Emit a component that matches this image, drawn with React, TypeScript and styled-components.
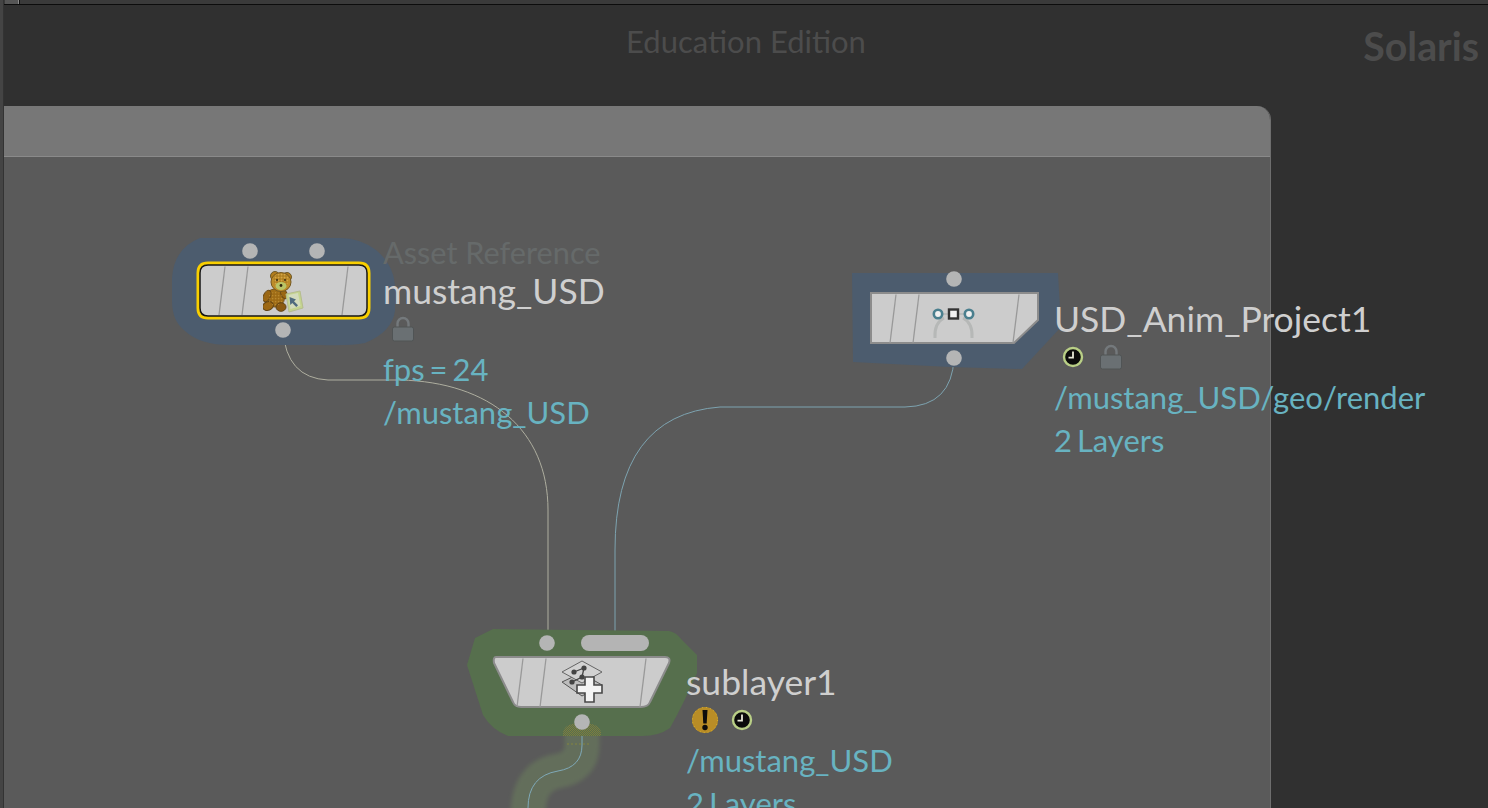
import styled, { createGlobalStyle } from "styled-components";

const GlobalStyle = createGlobalStyle`
    html, body {
        margin: 0;
        padding: 0;
        background: #303030;
    }
`

const FONT = `Lato, "Open Sans", sans-serif`;

type BadgeKind = "lock" | "clock" | "warn";

const Lock = () => (
    <svg width="26" height="26" viewBox="0 0 26 26">
        <path d="M7.5 12V7.500a5.500 5.500 0 0 1 11 0V12" fill="none" stroke="#74797c" strokeWidth="2.400" />
        <rect x="2.500" y="11" width="21" height="14" rx="2" fill="#6a7073" stroke="#505455" strokeWidth="1" />
    </svg>
)

const Clock = () => (
    <svg width="24" height="24" viewBox="0 0 24 24">
        <circle cx="12" cy="12" r="9" fill="#0b0b0b" stroke="#b9cf86" strokeWidth="2.400" />
        <path d="M12 6.500V12.600H7.500" fill="none" stroke="#e8e8d8" strokeWidth="1.800" />
    </svg>
)

const Warn = () => (
    <WarnIcon width="28" height="28" viewBox="0 0 28 28">
        <circle cx="14" cy="14" r="13" fill="#b98d26" />
        <circle cx="14" cy="14" r="12.600" fill="none" stroke="#e9c22e" strokeWidth="0.800" strokeDasharray="1 3" />
        <path d="M11.500 4h5l-.8 13.500h-3.400z" fill="#0c0c0c" />
        <circle cx="14" cy="21.500" r="2.700" fill="#0c0c0c" />
    </WarnIcon>
)

const badgeIcons = { lock: Lock, clock: Clock, warn: Warn };

const Teddy = () => (
    <svg x="63" y="6" width="42" height="44" viewBox="0 0 42 44">
        <defs>
            <pattern id="fur" width="3" height="3" patternUnits="userSpaceOnUse">
                <rect width="1.200" height="1.200" fill="#d9b058" />
                <rect x="1.500" y="1.500" width="1" height="1" fill="#70490e" />
            </pattern>
        </defs>
        <circle cx="12" cy="5" r="4.500" fill="#b27d1d" stroke="#6c5a2c" strokeWidth="1" />
        <circle cx="24" cy="6" r="4.500" fill="#b27d1d" stroke="#6c5a2c" strokeWidth="1" />
        <ellipse cx="12" cy="27" rx="9.500" ry="9" fill="#a26f17" stroke="#77531a" strokeWidth="1" />
        <ellipse cx="4" cy="25" rx="3.400" ry="6" transform="rotate(25 4 25)" fill="#9a6714" stroke="#6b4a16" />
        <ellipse cx="21" cy="23" rx="3" ry="5" transform="rotate(-25 21 23)" fill="#9a6714" stroke="#6b4a16" />
        <ellipse cx="5" cy="35" rx="5.500" ry="4.300" transform="rotate(-20 5 35)" fill="#9d6814" stroke="#614312" />
        <ellipse cx="18" cy="36" rx="5" ry="4.300" fill="#8b5a12" stroke="#614312" />
        <ellipse cx="12" cy="28" rx="8" ry="7" fill="url(#fur)" opacity="0.400" />
        <ellipse cx="18" cy="11" rx="10" ry="9.500" fill="#bd8c2a" stroke="#75581f" strokeWidth="1" />
        <circle cx="18" cy="9" r="7.500" fill="url(#fur)" opacity="0.700" />
        <ellipse cx="18" cy="15" rx="5.500" ry="4" fill="#b9c466" />
        <circle cx="18" cy="14.500" r="1.400" fill="#2f2410" />
        <circle cx="14" cy="9" r="1" fill="#3a2c10" />
        <circle cx="22" cy="9" r="1" fill="#3a2c10" />
        <path d="M23 23l14-3 3 17-14 4z" fill="#c4d48f" stroke="#b5bc8e" strokeWidth="1" />
        <path d="M25.500 24l9.500-2 2.500 13-10 3z" fill="#d3dbbc" />
        <path d="M26.500 26l.8 8 2-2 4 4 1.700-1.700-4-4 2-1.800z" fill="#4f6a7e" />
    </svg>
)

const Operator = () => (
    <svg x="60" y="12" width="46" height="36" viewBox="0 0 46 36">
        <path d="M4 33Q3 18 13 13M41 33Q42 18 32 13" fill="none" stroke="#b6b8b7" strokeWidth="3" />
        <path d="M10 9h8M27 9h8" stroke="#b9bcbc" strokeWidth="2" />
        <circle cx="7" cy="9" r="4.200" fill="#f0f0f0" stroke="#4a7f8e" strokeWidth="2.600" />
        <circle cx="38" cy="9" r="4.200" fill="#f0f0f0" stroke="#4a7f8e" strokeWidth="2.600" />
        <rect x="18" y="4.500" width="9" height="9" fill="#f2f2f2" stroke="#333" strokeWidth="2.400" />
    </svg>
)

const Sublayer = () => (
    <svg x="68" y="3" width="44" height="44" viewBox="0 0 44 44">
        <path d="M1 22l19-9 21 12-20 11z" fill="#bdbdbd" stroke="#555" strokeWidth="1" />
        <path d="M1 12L21 1l20 11-20 11z" fill="#d2d2d2" stroke="#666" strokeWidth="1" />
        <path d="M13 12L23 8l-2 9-10 5" fill="none" stroke="#444" strokeWidth="1.300" />
        <circle cx="13" cy="12" r="2.600" fill="#444" />
        <circle cx="23" cy="8" r="2.600" fill="#444" />
        <circle cx="21" cy="17" r="2.600" fill="#444" />
        <circle cx="11" cy="22" r="2.600" fill="#444" />
        <path d="M24 17h9v8h8v8h-8v9h-9v-9h-8v-8h8z" fill="#f4f4f4" stroke="#484848" strokeWidth="1.600" />
    </svg>
)

interface ShapeProps {
    outline: string;
    bars: number[];
    hilite?: boolean;
}

// the grey body of a node, with the slanted bars that every node shows
const NodeShape = ({ outline, bars, hilite }: ShapeProps) => (
    <>
        {hilite && <path d={outline} fill="none" stroke="#f9cf00" strokeWidth="7" />}
        <path d={outline} fill="#cccccc" stroke={hilite ? "#161616" : "#8c8c8c"} strokeWidth={hilite ? 1.500 : 2} />
        {bars.map((bar) => (
            <path key={bar} d={`M${bar + 3} 1.500L${bar - 3} 50`} stroke="#999" strokeWidth="1.300" fill="none" />
        ))}
    </>
)

const SublayerGlow = () => (
    <>
        <defs>
            <pattern id="olive" width="2" height="2" patternUnits="userSpaceOnUse">
                <rect width="1" height="1" fill="#7f7d40" />
                <rect x="1" y="1" width="1" height="1" fill="#7f7d40" />
            </pattern>
        </defs>
        <path d="M99 108V104Q101 95 118 95Q135 95 137 104V108Z" fill="url(#olive)" />
        <path d="M103 116h22" stroke="#84843f" strokeWidth="1" strokeDasharray="2 2" />
    </>
)

const nodes = [
    {
        id: "mustang",
        x: 170,
        y: 236,
        width: 226,
        height: 110,
        blob: "M30 2H170Q190 2 206 14Q225 30 225 53V75Q222 96 195 107Q180 110 150 109H60Q30 109 15 95Q2 85 2 65V42Q4 12 30 2Z",
        blobFill: "#4c5c6e",
        body: { x: 30, y: 29, outline: "M8 0H159Q167 0 167 8V43Q167 51 159 51H8Q0 51 0 43V8Q0 0 8 0Z", bars: [22, 45, 145], hilite: true },
        ports: [[80, 15], [147, 15], [113, 94]],
        icon: <Teddy />,
    },
    {
        id: "anim",
        x: 850,
        y: 270,
        width: 212,
        height: 102,
        blob: "M2 3H208L211 57L172 99L100 97L3 92Z",
        blobFill: "#4c5c6e",
        body: { x: 21, y: 23, outline: "M0 0H167V27L143 50H0Z", bars: [22, 45, 145] },
        ports: [[104, 9], [104, 88]],
        icon: <Operator />,
    },
    {
        id: "sublayer",
        x: 464,
        y: 628,
        width: 236,
        height: 112,
        blob: "M29 1L205 3Q212 4 218 12L233 27V45Q220 75 206 100Q195 108 178 108H44Q28 102 19 87L3 37L11 10Z",
        blobFill: "#566f4d",
        body: { x: 29, y: 29, outline: "M3 0H172Q178 0 176 6L157 45Q155 50 148 50H28Q22 50 20 45L1 6Q0 0 3 0Z", bars: [27, 50, 150] },
        ports: [[83, 15], [118, 94]],
        icon: <Sublayer />,
        pill: true,
        glow: <SublayerGlow />,
    },
];

const labels = [
    {
        id: "mustang",
        x: 383,
        y: 234,
        type: "Asset Reference",
        name: "mustang_USD",
        badges: ["lock"] as BadgeKind[],
        info: ["fps = 24", "/mustang_USD"],
    },
    {
        id: "anim",
        x: 1054,
        y: 300,
        name: "USD_Anim_Project1",
        badges: ["clock", "lock"] as BadgeKind[],
        info: ["/mustang_USD/geo/render", "2 Layers"],
    },
    {
        id: "sublayer",
        x: 686,
        y: 663,
        name: "sublayer1",
        badges: ["warn", "clock"] as BadgeKind[],
        info: ["/mustang_USD", "2 Layers"],
    },
];

export default function App() {
    return (
        <>
            <GlobalStyle />
            <Page>
                <SideStrip />
                <Main>
                    <TopStrip>
                        <TopTab />
                    </TopStrip>
                    <Banner>
                        <span />
                        <Edition>Education Edition</Edition>
                        <Context>Solaris</Context>
                    </Banner>
                    <Panel>
                        <PanelHeader />
                        <PanelBody />
                    </Panel>
                </Main>

                <Wires width="1488" height="808" viewBox="0 0 1488 808">
                    <GlowPath d="M582 728V745Q582 767 558 771Q528 776 528 815" />
                    <path d="M582 722V745Q582 767 558 771Q528 776 528 808" fill="none" stroke="#7fa9b8" strokeWidth="1" />
                    <path d="M283 330Q286 378 328 380H400C490 382 548 430 548 510V642" fill="none" stroke="#aeae9f" strokeWidth="1" />
                    <path d="M954 358Q952 406 905 407H720Q615 415 615 550V636" fill="none" stroke="#7da3b0" strokeWidth="1" />
                </Wires>

                {nodes.map((node) => (
                    <NodeGraphic key={node.id} $x={node.x} $y={node.y} width={node.width} height={node.height}>
                        <path d={node.blob} fill={node.blobFill} />
                        {node.glow}
                        <g transform={`translate(${node.body.x} ${node.body.y})`}>
                            <NodeShape outline={node.body.outline} bars={node.body.bars} hilite={node.body.hilite} />
                            {node.icon}
                        </g>
                        {node.pill && <rect x="117" y="7" width="68" height="16" rx="8" fill="#b4b4b4" />}
                        {node.ports.map(([cx, cy]) => (
                            <circle key={`${cx}-${cy}`} cx={cx} cy={cy} r="7.800" fill="#b4b5b5" />
                        ))}
                    </NodeGraphic>
                ))}

                {labels.map((label) => (
                    <NodeLabel key={label.id} $x={label.x} $y={label.y}>
                        {label.type && <NodeType>{label.type}</NodeType>}
                        <NodeName>{label.name}</NodeName>
                        <Badges>
                            {label.badges.map((kind) => {
                                const Icon = badgeIcons[kind];
                                return <Icon key={kind} />;
                            })}
                        </Badges>
                        {label.info.map((line) => (
                            <InfoLine key={line}>{line}</InfoLine>
                        ))}
                    </NodeLabel>
                ))}
            </Page>
        </>
    )
}


const Page = styled.div`
    position: relative;
    display: flex;
    width: 1488px;
    height: 808px;
    overflow: hidden;
    background: #303030;
    font-family: ${FONT};
`

const SideStrip = styled.div`
    width: 4px;
    flex: none;
    background: #444;
    border-right: 1px solid #333;
    box-sizing: border-box;
`

const Main = styled.div`
    flex: 1;
    display: flex;
    flex-direction: column;
    min-width: 0;
`

const TopStrip = styled.div`
    height: 4px;
    flex: none;
    background: #3a3a3a;
    border-bottom: 1px solid #0c0c0c;
    padding-left: 1px;
`

const TopTab = styled.div`
    width: 13px;
    height: 4px;
    background: #555;
    border-right: 1px solid #8a8a8a;
    box-shadow: 1px 0 0 #111;
`

const Banner = styled.div`
    height: 101px;
    flex: none;
    display: grid;
    grid-template-columns: 1fr auto 1fr;
    align-items: start;
    padding-top: 18px;
    box-sizing: border-box;
`

const Edition = styled.div`
    font-size: 31px;
    line-height: 36px;
    color: #4c4c4c;
`

const Context = styled.div`
    justify-self: end;
    margin-right: 9px;
    font-size: 39.3px;
    line-height: 46px;
    font-weight: 700;
    color: #4c4c4c;
`

const Panel = styled.div`
    width: 1267px;
    flex: 1;
    display: flex;
    flex-direction: column;
    border-radius: 0 14px 0 0;
    overflow: hidden;
    border-right: 1px solid #6e6e6e;
    box-sizing: border-box;
`

const PanelHeader = styled.div`
    height: 50px;
    flex: none;
    background: #777;
    border-bottom: 1px solid #8a8a8a;
`

const PanelBody = styled.div`
    flex: 1;
    background: #5a5a5a;
`

const Wires = styled.svg`
    position: absolute;
    left: 0;
    top: 0;
`

const GlowPath = styled.path`
    fill: none;
    stroke: #66745c;
    stroke-width: 35px;
    opacity: 0.8;
    filter: blur(2px);
`

const NodeGraphic = styled.svg<{ $x: number; $y: number }>`
    position: absolute;
    left: ${(props) => props.$x}px;
    top: ${(props) => props.$y}px;
    overflow: visible;
`

const NodeLabel = styled.div<{ $x: number; $y: number }>`
    position: absolute;
    left: ${(props) => props.$x}px;
    top: ${(props) => props.$y}px;
    white-space: nowrap;
`

const NodeType = styled.div`
    font-size: 30.7px;
    line-height: 38px;
    color: #666a6a;
`

const NodeName = styled.div`
    font-size: 35.5px;
    line-height: 37px;
    margin-bottom: 1px;
    color: #cfcfcf;
`

const Badges = styled.div`
    display: flex;
    align-items: center;
    gap: 13px;
    height: 38px;
    padding-left: 7px;
`

const WarnIcon = styled.svg`
    margin: 0 -2px;
`

const InfoLine = styled.div`
    font-size: 31px;
    line-height: 43px;
    word-spacing: -3px;
    color: #68b3c1;
`
